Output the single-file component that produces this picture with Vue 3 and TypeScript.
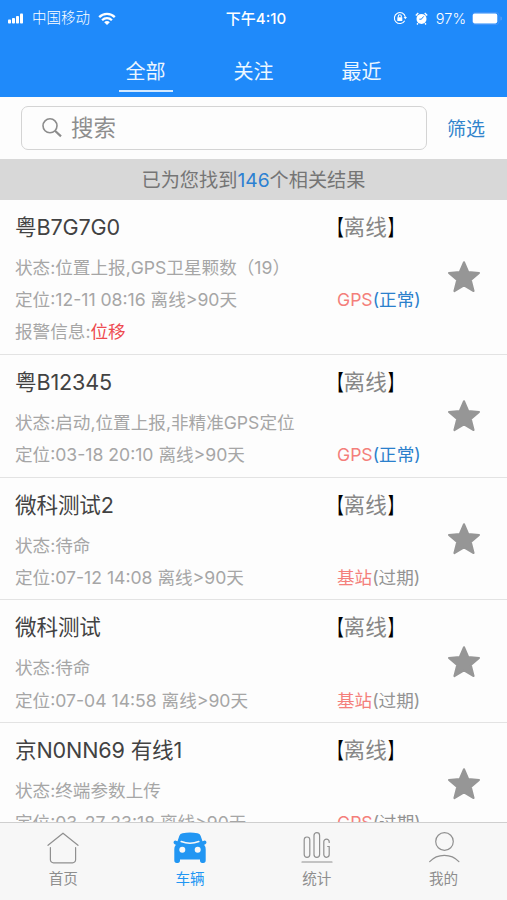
<script setup lang="ts">
interface Vehicle {
  name: string
  status: string
  position: string
  alarm?: string
  source: string
  validity: string
  valid: boolean
}

const tabs: string[] = ['全部', '关注', '最近']

const vehicles: Vehicle[] = [
  { name: '粤B7G7G0', status: '位置上报,GPS卫星颗数（19）', position: '12-11 08:16 离线>90天', alarm: '位移', source: 'GPS', validity: '正常', valid: true },
  { name: '粤B12345', status: '启动,位置上报,非精准GPS定位', position: '03-18 20:10 离线>90天', source: 'GPS', validity: '正常', valid: true },
  { name: '微科测试2', status: '待命', position: '07-12 14:08 离线>90天', source: '基站', validity: '过期', valid: false },
  { name: '微科测试', status: '待命', position: '07-04 14:58 离线>90天', source: '基站', validity: '过期', valid: false },
  { name: '京N0NN69 有线1', status: '终端参数上传', position: '03-27 23:18 离线>90天', source: 'GPS', validity: '过期', valid: false },
]
</script>

<template>
  <div class="screen">
    <header class="header">
      <div class="statusbar">
        <div class="side">
          <svg class="signal" viewBox="0 0 16 11" width="16" height="11" fill="#fff">
            <rect x="0" y="6.5" width="3" height="4" rx="0.8" />
            <rect x="4" y="5" width="3" height="5.5" rx="0.8" />
            <rect x="8" y="3" width="3" height="7.5" rx="0.8" />
            <rect x="12" y="0.5" width="3" height="10" rx="0.8" />
          </svg>
          <span class="carrier">中国移动</span>
          <svg class="wifi" viewBox="0 0 18 13" width="18" height="13" fill="none" stroke="#fff" stroke-width="2.3">
            <path d="M1.2 5.1a11 11 0 0 1 15.6 0" />
            <path d="M4.1 8.2a7 7 0 0 1 9.8 0" />
            <path d="M9 13 6.2 10.2a3.9 3.9 0 0 1 5.6 0z" fill="#fff" stroke="none" />
          </svg>
        </div>
        <div class="clock">下午4:10</div>
        <div class="side right">
          <svg viewBox="0 0 14 14" width="14" height="14" fill="none" stroke="#fff" stroke-width="1.1">
            <path d="M11.7 9.7A5.5 5.5 0 1 1 12.3 6" />
            <path d="M10.6 6h3.4l-1.7 2.3z" fill="#fff" stroke="none" />
            <rect x="4.3" y="6.3" width="5" height="3.8" rx="0.4" fill="#fff" stroke="none" />
            <path d="M5.3 6.5V5.2a1.5 1.5 0 0 1 3 0v1.3" />
          </svg>
          <svg class="alarm-icon" viewBox="0 0 13 13" width="13" height="13">
            <circle cx="6.5" cy="6.9" r="5" fill="#fff" />
            <path d="M.8 3.5 3.3 1M9.7 1l2.5 2.5M3 11.3l-1 1.2M10 11.3l1 1.2" stroke="#fff" stroke-width="1.4" />
            <path d="M6.3 7.2 8.7 4.4M6.5 7.2H4.3" stroke="#1f8afa" stroke-width="1" fill="none" />
          </svg>
          <span class="percent">97%</span>
          <svg class="battery" viewBox="0 0 30 13" width="30" height="13">
            <rect x="0.5" y="0.5" width="26.5" height="12" rx="3" fill="none" stroke="#4293f8" />
            <rect x="0.8" y="1.6" width="24.5" height="9.8" rx="1.8" fill="#fff" />
            <path d="M28.3 4.5v4a2 2 0 0 0 0-4z" fill="#4c9bf8" />
          </svg>
        </div>
      </div>
      <nav class="tabs">
        <span v-for="(tab, i) in tabs" :key="tab" class="tab" :class="{ active: i === 0 }">{{ tab }}</span>
      </nav>
    </header>

    <div class="search-row">
      <div class="search-box">
        <svg viewBox="0 0 22 22" width="22" height="22" fill="none" stroke="#8c8c8c">
          <circle cx="9" cy="8.8" r="7" stroke-width="1.6" />
          <path d="M14 13.8 20 19.4" stroke-width="2.2" />
        </svg>
        <span>搜索</span>
      </div>
      <span class="filter">筛选</span>
    </div>

    <div class="summary">已为您找到<span class="count">146</span>个相关结果</div>

    <main class="list">
      <article v-for="v in vehicles" :key="v.name" class="vehicle">
        <div class="info">
          <div class="name">{{ v.name }}</div>
          <div class="line">状态:{{ v.status }}</div>
          <div class="line">定位:{{ v.position }}</div>
          <div v-if="v.alarm" class="line">报警信息:<span class="alarm">{{ v.alarm }}</span></div>
        </div>
        <div class="state">
          <div class="online"><b class="open">【</b>离线<b class="close">】</b></div>
          <div class="source">
            <span class="kind">{{ v.source }}</span><span :class="v.valid ? 'ok' : 'expired'">({{ v.validity }})</span>
          </div>
        </div>
        <svg class="star" viewBox="0 0 34 34" width="34" height="34">
          <path d="M17 2.2 21.2 12 32 13 23.8 20.1 26.6 31.1 17 25.5 7.4 31.1 10.2 20.1 2 13 12.8 12z" fill="#969696" stroke="#969696" stroke-width="2" stroke-linejoin="round" />
        </svg>
      </article>
    </main>

    <footer class="tabbar">
      <div class="item">
        <svg viewBox="0 0 34 34" width="34" height="34" fill="none" stroke="#909090" stroke-width="1.2" stroke-linecap="round" stroke-linejoin="round">
          <path d="M2 14.3 17 2.2l15 12.1" />
          <path d="M4.4 16.5v12.3a3 3 0 0 0 3 3h19.2a3 3 0 0 0 3-3V16.5" />
        </svg>
        <span>首页</span>
      </div>
      <div class="item current">
        <svg viewBox="0 0 34 34" width="34" height="34">
          <path fill="#2196f3" d="M9.5 2.2Q17 .8 24.5 2.2 26.8 2.6 27.6 4.8L29.5 10.3l2.2-.7q1.6 0 1.8 1.6 0 1.6-1.5 2.3l-.9.3q1.6 1.8 1.6 4.5v11q0 2.7-2.4 2.7h-1.1q-2.2 0-2.2-2.7v-.8H7v.8q0 2.7-2.2 2.7H3.7q-2.4 0-2.4-2.7v-11q0-2.7 1.6-4.5L2 13.5Q.5 12.8.5 11.2.7 9.6 2.3 9.6l2.2.7 1.9-5.5Q7.2 2.6 9.5 2.2z" />
          <path d="M8.2 10.5Q17 14 25.8 10.5" fill="none" stroke="#f7f7f7" stroke-width="1.6" stroke-linecap="round" />
          <circle cx="9.3" cy="18.7" r="3" fill="#f7f7f7" />
          <circle cx="24.7" cy="18.7" r="3" fill="#f7f7f7" />
        </svg>
        <span>车辆</span>
      </div>
      <div class="item">
        <svg viewBox="0 0 34 34" width="34" height="34" fill="none" stroke="#909090" stroke-width="1.2" stroke-linecap="round">
          <rect x="4.2" y="6" width="5.6" height="20.3" rx="2.8" />
          <rect x="14" y="1.7" width="5.6" height="24.6" rx="2.8" />
          <path d="M29.2 11.5V10.8a2.7 2.7 0 0 0-5.4 0v12.8a2.7 2.7 0 0 0 5.4 0V15.5h-1.5" />
          <path d="M2 31h30" />
        </svg>
        <span>统计</span>
      </div>
      <div class="item">
        <svg viewBox="0 0 34 34" width="34" height="34" fill="none" stroke="#909090" stroke-width="1.2" stroke-linecap="round">
          <circle cx="17.5" cy="10.5" r="8.8" />
          <path d="M2.7 30.6Q8.5 24.3 17.3 24.3T31.9 30.6" />
        </svg>
        <span>我的</span>
      </div>
    </footer>
  </div>
</template>

<style>
body {
  margin: 0;
  overflow: hidden;
}
</style>

<style scoped>
.screen {
  display: flex;
  flex-direction: column;
  width: 507px;
  height: 900px;
  overflow: hidden;
  background: #fdfdfd;
  font-family: Inter, 'Noto Sans CJK SC', sans-serif;
  font-weight: 400;
  white-space: nowrap;
}
svg {
  display: block;
  flex: none;
}
.header {
  flex: none;
  height: 97px;
  background: #1f8afa;
  color: #fff;
}
.statusbar {
  display: grid;
  grid-template-columns: 1fr auto 1fr;
  align-items: center;
  height: 36px;
  padding: 0 5px 0 8px;
  font-size: 14.5px;
}
.side {
  display: flex;
  align-items: center;
  font-weight: 300;
}
.right {
  justify-content: flex-end;
}
.carrier {
  height: 22px;
  margin: 0 8px;
  line-height: 22px;
}
.clock {
  height: 36px;
  padding-left: 2px;
  font-size: 15px;
  font-weight: 500;
  line-height: 37px;
}
.alarm-icon {
  margin: 0 8px;
}
.percent {
  margin-right: 6px;
}
.tabs {
  display: flex;
  justify-content: center;
  gap: 54px;
  padding-top: 13px;
  font-size: 20px;
}
.tab {
  width: 54px;
  height: 41px;
  border-bottom: 2px solid transparent;
  color: #ecf6ff;
  line-height: 46px;
  text-align: center;
}
.tab.active {
  border-bottom-color: #d3e9ff;
}
.search-row {
  display: flex;
  flex: none;
  align-items: center;
  height: 62px;
  padding-left: 21px;
}
.search-box {
  display: flex;
  align-items: center;
  gap: 8px;
  box-sizing: border-box;
  width: 406px;
  height: 44px;
  padding-left: 19px;
  border: 1.5px solid #d4d4d4;
  border-radius: 7px;
  color: #8e8e8e;
  font-size: 22.5px;
  line-height: 42px;
}
.filter {
  height: 30px;
  margin-left: 20px;
  color: #3184cc;
  font-size: 19px;
  line-height: 33px;
}
.summary {
  flex: none;
  height: 41px;
  background: #d8d8d8;
  color: #757575;
  font-size: 19.2px;
  line-height: 43px;
  text-align: center;
}
.count {
  color: #2b80d2;
}
.list {
  flex: 1;
  min-height: 0;
  overflow: hidden;
}
.vehicle {
  display: grid;
  grid-template-columns: 307px 125px 1fr;
  box-sizing: border-box;
  padding: 12px 0 5.4px 15px;
  border-bottom: 1px solid #e3e3e3;
}
.name,
.online {
  height: 31px;
  margin-bottom: 9px;
  font-size: 21.6px;
  line-height: 31px;
}
.name {
  color: #424242;
  letter-spacing: -0.15px;
}
.line,
.source {
  height: 32.2px;
  color: #a6a6a6;
  font-size: 17.6px;
  line-height: 32.2px;
}
.alarm {
  color: #ee4a50;
}
.online {
  color: #878787;
}
.online b {
  display: inline-block;
  color: #000;
  font-weight: 700;
}
.open {
  transform: translateX(0.8px) scaleX(0.66);
  transform-origin: 88% 50%;
}
.close {
  transform: scaleX(0.66);
  transform-origin: 12% 50%;
}
.source {
  padding: 32.2px 0 0 15px;
}
.kind {
  color: #f47f7b;
}
.ok {
  color: #2b80cc;
}
.expired {
  color: #939393;
}
.star {
  align-self: center;
  margin-top: -6px;
}
.tabbar {
  display: grid;
  grid-template-columns: repeat(4, 1fr);
  flex: none;
  height: 77px;
  border-top: 1px solid #cfcfcf;
  background: #f7f7f7;
}
.item {
  display: flex;
  flex-direction: column;
  align-items: center;
  padding-top: 8px;
  color: #8e8e8e;
  font-size: 14.6px;
  line-height: 29px;
}
.current {
  color: #2196f3;
}
</style>
